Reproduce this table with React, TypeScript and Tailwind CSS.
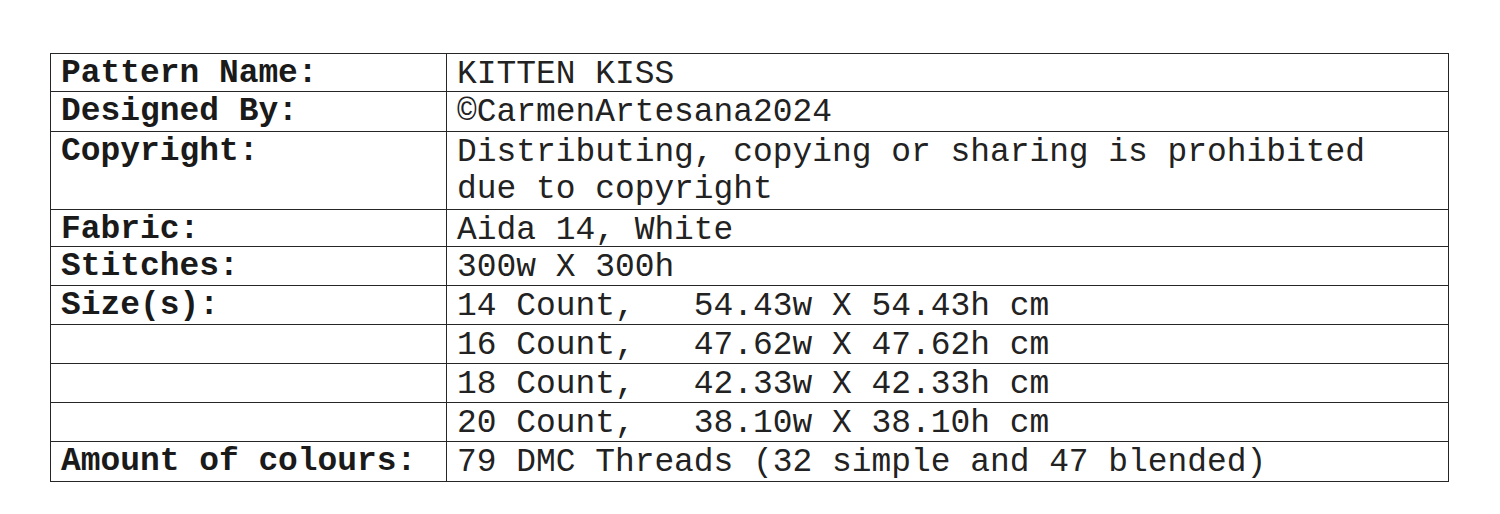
import React from "react";

type Row = { label: string; value: React.ReactNode; h: string };

const rows: Row[] = [
  { label: "Pattern Name:", value: "KITTEN KISS", h: "h-[37px]" },
  { label: "Designed By:", value: "©CarmenArtesana2024", h: "h-[40px]" },
  {
    label: "Copyright:",
    value: (
      <>
        Distributing, copying or sharing is prohibited
        <br />
        due to copyright
      </>
    ),
    h: "h-[78px]",
  },
  { label: "Fabric:", value: "Aida 14, White", h: "h-[37px]" },
  { label: "Stitches:", value: "300w X 300h", h: "h-[39px]" },
  { label: "Size(s):", value: "14 Count,   54.43w X 54.43h cm", h: "h-[39px]" },
  { label: "", value: "16 Count,   47.62w X 47.62h cm", h: "h-[39px]" },
  { label: "", value: "18 Count,   42.33w X 42.33h cm", h: "h-[39px]" },
  { label: "", value: "20 Count,   38.10w X 38.10h cm", h: "h-[39px]" },
  { label: "Amount of colours:", value: "79 DMC Threads (32 simple and 47 blended)", h: "h-[40px]" },
];

export default function App() {
  return (
    <div className="w-[1500px] h-[514px] bg-white pt-[53px] pl-[50px]">
      <div
        className="w-[1399px] border border-[#262626] text-[#1a1a1a] text-[32.9px] leading-[37px]"
        style={{ fontFamily: '"Courier New", "Nimbus Mono PS", "FreeMono", Courier, "Liberation Mono", monospace' }}
      >
        {rows.map((r, i) => (
          <div
            key={i}
            className={`flex ${r.h} ${i > 0 ? "border-t border-[#262626]" : ""}`}
          >
            <div className="w-[396px] shrink-0 border-r border-[#262626] pl-[10px] pt-[1px] font-bold whitespace-pre">
              {r.label}
            </div>
            <div className="flex-1 pl-[10px] pt-[2px] whitespace-pre text-[#222]">{r.value}</div>
          </div>
        ))}
      </div>
    </div>
  );
}
